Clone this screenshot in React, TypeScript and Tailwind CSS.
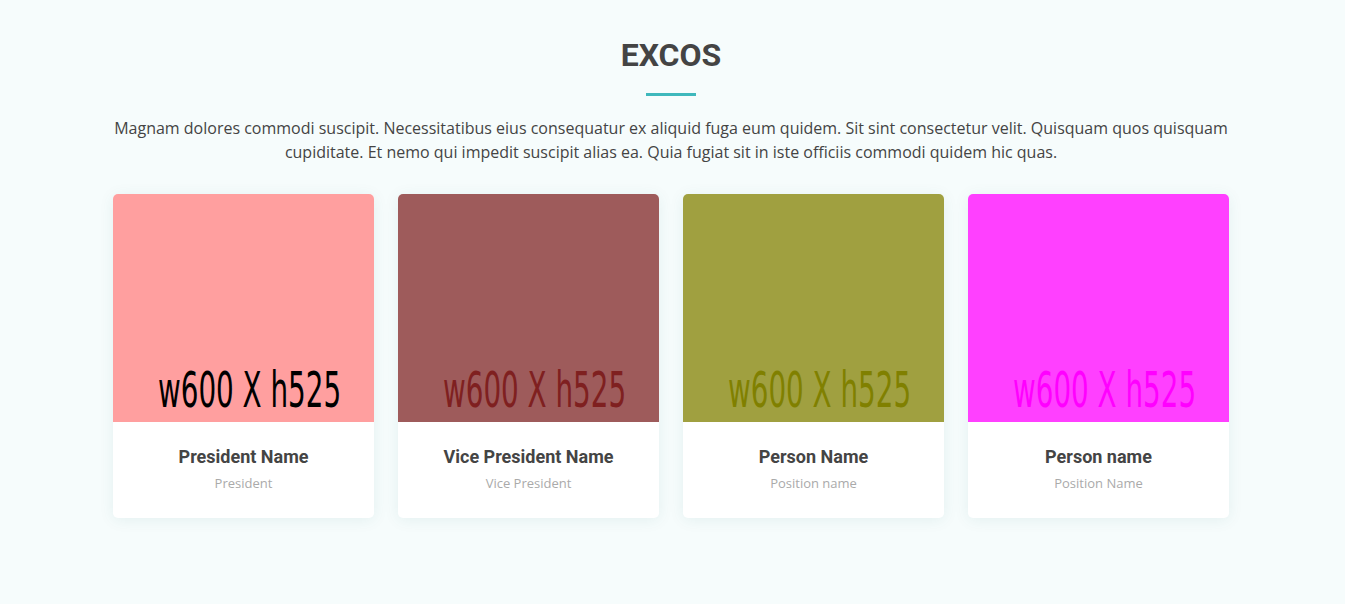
import React from "react";

const members = [
  { name: "President Name", role: "President", bg: "bg-[#ff9f9f]", fg: "text-[#000000]" },
  { name: "Vice President Name", role: "Vice President", bg: "bg-[#9e5b5b]", fg: "text-[#7f2020]" },
  { name: "Person Name", role: "Position name", bg: "bg-[#a0a040]", fg: "text-[#808000]" },
  { name: "Person name", role: "Position Name", bg: "bg-[#ff40ff]", fg: "text-[#ff00ff]" },
];

export default function App() {
  return (
    <div className="min-h-[604px] bg-[#f6fcfc] overflow-hidden">
      <div className="h-0 shadow-[0_0_18px_rgba(0,40,40,0.14)]" />
      <section className="ml-[113px] w-[1116px] pt-[36px] pb-[80px]">
        <div className="flex flex-col items-center">
          <h2 className="font-['Roboto',sans-serif] font-bold text-[32px] leading-[38px] text-[#444444] tracking-[0px]">
            EXCOS
          </h2>
          <div className="mt-[19px] w-[50px] h-[3px] bg-[#3fb8bc]" />
          <p className="mt-[20px] text-center font-['Open_Sans',sans-serif] text-[16px] leading-[24px] text-[#444444]">
            Magnam dolores commodi suscipit. Necessitatibus eius consequatur ex aliquid fuga eum quidem. Sit sint consectetur velit. Quisquam quos quisquam cupiditate. Et nemo qui impedit suscipit alias ea. Quia fugiat sit in iste officiis commodi quidem hic quas.
          </p>
        </div>
        <div className="mt-[30px] grid grid-cols-4 gap-[24px]">
          {members.map((m) => (
            <div
              key={m.name}
              className="bg-white rounded-[5px] overflow-hidden shadow-[0_2px_15px_rgba(0,100,100,0.08)]"
            >
              <div className={`${m.bg} h-[228px] flex items-end overflow-hidden whitespace-nowrap`}>
                <span
                  className={`${m.fg} ml-[45px] mb-[7px] inline-block origin-left scale-x-[0.567] font-['DejaVu_Sans',sans-serif] text-[49px] leading-none`}
                >
                  w600 X h525
                </span>
              </div>
              <div className="pt-[24px] pb-[25px] text-center">
                <h4 className="font-['Roboto',sans-serif] font-bold text-[18px] leading-[22px] text-[#444444]">
                  {m.name}
                </h4>
                <div className="mt-[5px] font-['Open_Sans',sans-serif] text-[13px] leading-[20px] text-[#aaaaaa]">
                  {m.role}
                </div>
              </div>
            </div>
          ))}
        </div>
      </section>
    </div>
  );
}
